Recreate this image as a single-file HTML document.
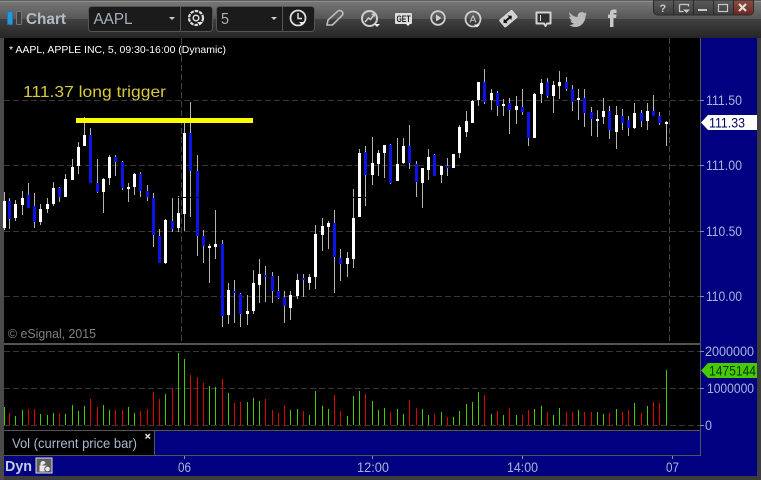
<!DOCTYPE html>
<html><head><meta charset="utf-8"><title>Chart</title>
<style>html,body{margin:0;padding:0;background:#3a3a3a;width:761px;height:480px;overflow:hidden}svg{display:block}
text{font-family:"Liberation Sans",sans-serif}</style></head><body>
<svg width="761" height="480" viewBox="0 0 761 480" xmlns="http://www.w3.org/2000/svg">
<defs>
<linearGradient id="t1" x1="0" y1="0" x2="0" y2="1"><stop offset="0" stop-color="#7a7a7a"/><stop offset="1" stop-color="#565656"/></linearGradient>
<linearGradient id="t2" x1="0" y1="0" x2="0" y2="1"><stop offset="0" stop-color="#414141"/><stop offset="1" stop-color="#262626"/></linearGradient>
<linearGradient id="wb" x1="0" y1="0" x2="0" y2="1"><stop offset="0" stop-color="#5c5c5c"/><stop offset="1" stop-color="#3c3c3c"/></linearGradient>
<linearGradient id="wr" x1="0" y1="0" x2="0" y2="1"><stop offset="0" stop-color="#8d4a3e"/><stop offset="1" stop-color="#6a2a20"/></linearGradient>
</defs>
<rect width="761" height="480" fill="#3c3c3c"/>
<rect x="0" y="0" width="4" height="480" fill="#4a4a4a"/>
<rect x="0" y="0" width="761" height="19" fill="url(#t1)"/>
<rect x="0" y="0" width="761" height="1" fill="#5e5e5e"/>
<rect x="0" y="1" width="761" height="1" fill="#8e8e8e"/>
<rect x="0" y="19" width="761" height="19" fill="url(#t2)"/>

<!-- title -->
<rect x="7.5" y="11.5" width="5" height="13" rx="1" fill="#1d9ae2" stroke="#3a6f96"/>
<rect x="16.5" y="11.5" width="5" height="13" rx="1" fill="#3c3c3c" stroke="#777"/>
<text x="26" y="24" font-size="16" font-weight="bold" fill="#b4bcc6" textLength="40" lengthAdjust="spacingAndGlyphs">Chart</text>

<!-- symbol box -->
<rect x="88.5" y="6.5" width="124" height="25" rx="3" fill="#1b1b1b" stroke="#555"/>
<path d="M180.5 7V31" stroke="#555"/>
<text x="93.500" y="24" font-size="16" fill="#a6b0bc" textLength="39" lengthAdjust="spacingAndGlyphs">AAPL</text>
<path d="M169 17h6l-3 3z" fill="#ccc"/>
<circle cx="196" cy="18" r="7" fill="none" stroke="#ddd" stroke-width="2.200" stroke-dasharray="3.500 1"/>
<circle cx="196" cy="18" r="2.800" fill="none" stroke="#ddd" stroke-width="1.500"/>
<path d="M197 22h6l-3 3z" fill="#eee"/>
<rect x="216.500" y="6.500" width="98" height="25" rx="3" fill="#1b1b1b" stroke="#555"/>
<path d="M282.500 7V31" stroke="#555"/>
<text x="221" y="24" font-size="16" fill="#a6b0bc" textLength="8" lengthAdjust="spacingAndGlyphs">5</text>
<path d="M271 17h6l-3 3z" fill="#ccc"/>
<circle cx="298" cy="18" r="7.500" fill="none" stroke="#ddd" stroke-width="1.800"/>
<path d="M298 13V18.500H302" fill="none" stroke="#ddd" stroke-width="1.500"/>
<path d="M299 22h6l-3 3z" fill="#eee"/>

<!-- toolbar icons -->
<g fill="none">
<path d="M327 25l1-5 10-9c1.500-1 3-.5 4 .5s1.500 2.500 0 4l-9.500 9.500z" stroke="#bdbdbd" stroke-width="1.600"/>
<circle cx="369.500" cy="18.500" r="7.500" stroke="#cfcfcf" stroke-width="2"/>
<path d="M365 22l3.500-4 2 1.500 3.500-4.500" stroke="#cfcfcf" stroke-width="1.500"/>
<circle cx="438" cy="18" r="6.800" stroke="#cfcfcf" stroke-width="1.800"/>
<circle cx="473" cy="19" r="7.500" stroke="#cfcfcf" stroke-width="1.800"/>
</g>
<path d="M371 14l4-1v4z" fill="#ccc"/><path d="M374 24h6l-3 3z" fill="#eee"/>
<rect x="395" y="13" width="17" height="11" rx="1" fill="#dcdcdc"/>
<text x="396.500" y="22" font-size="9" font-weight="bold" fill="#222" textLength="14" lengthAdjust="spacingAndGlyphs">GET</text>
<path d="M405 23h6l-3 3z" fill="#eee"/>
<path d="M436 14.500v7l5.500-3.500z" fill="#cfcfcf"/>
<text x="469.500" y="22.500" font-size="10" fill="#d0d0d0" textLength="7" lengthAdjust="spacingAndGlyphs">A</text>
<path d="M474 24.500h6l-3 3z" fill="#eee"/>
<g transform="rotate(-40 508 19)"><rect x="500" y="14" width="17" height="10" rx="1.500" fill="#d4d4d4"/>
<path d="M502 19l3-3v2h5v-2l3 3-3 3v-2h-5v2z" fill="#111"/></g>
<path d="M536.500 12.500h14v11h-3.500l-1.500 2.500-1.500-2.500h-7.500z" fill="#2f2f2f" stroke="#d4d4d4" stroke-width="2" stroke-linejoin="round"/>
<path d="M540.500 15v6" stroke="#ddd"/>
<path d="M570 13c2 2.500 5 4 7.500 4 0-3 2-5 4.200-5 1.200 0 2 .5 2.800 1.300l2-1-1 2.400 1.500-.7-1.500 2c0 6-4.500 11-10 11-2.500 0-4.500-.7-6-2 2 0 3.300-.5 4.700-1.500-2 0-3.300-1.200-3.800-3h2c-2-.6-3-2-3.200-4l2 .5c-1.800-1.400-2.300-3.700-1.700-5z" fill="#bcbcbc"/>
<path d="M610 27v-9h-2v-3.500h2v-1.500c0-2.500 1.500-3.500 3.500-3.500h3v3.500h-2c-.8 0-1 .4-1 1v.5h3l-.5 3.500h-2.500v9z" fill="#c8c8c8"/>

<!-- window buttons -->
<path d="M653.500 0v11a4 4 0 0 0 4 4h92a4 4 0 0 0 4-4V0z" fill="url(#wb)" stroke="#2a2a2a"/>
<path d="M733 1h20v10a3.500 3.500 0 0 1-3.500 3.500H733z" fill="url(#wr)"/>
<path d="M673.500 0v15M693.500 0v15M713.500 0v15M733.500 0v15" stroke="#2a2a2a"/>
<text x="659.500" y="12" font-size="11" font-weight="bold" fill="#c8c8c8">?</text>
<path d="M679.500 4.500h9v2M679.500 4.500v7h4" fill="none" stroke="#c8c8c8" stroke-width="1.300"/><path d="M683 9.500h7l-3.500 3.500z" fill="#c8c8c8"/>
<rect x="698" y="9" width="9" height="2" fill="#c8c8c8"/>
<rect x="718.500" y="4.500" width="9" height="7" fill="none" stroke="#c8c8c8" stroke-width="1.200"/>
<path d="M739 4l7 7M746 4l-7 7" stroke="#ddd" stroke-width="2.200"/>

<!-- plot area -->
<rect x="4" y="38" width="697" height="306" fill="#000"/>
<rect x="4" y="345" width="697" height="86" fill="#000"/>
<rect x="4" y="431" width="151" height="25" fill="#000"/>
<rect x="155" y="431" width="546" height="25" fill="#000080"/>
<rect x="701" y="38" width="56" height="438" fill="#000080"/>
<rect x="4" y="456" width="753" height="20" fill="#000080"/>
<rect x="4" y="343" width="697" height="2" fill="#555"/>
<rect x="4" y="430" width="697" height="1" fill="#555"/>
<rect x="4" y="455" width="697" height="1" fill="#555"/>
<rect x="154" y="431" width="1" height="25" fill="#555"/>
<rect x="700" y="38" width="1" height="418" fill="#555"/>

<!-- grid -->
<g shape-rendering="crispEdges" stroke="#363636" stroke-dasharray="6 3" fill="none">
<path d="M4 100.500H700M4 165.500H700M4 231.500H700M4 296.500H700M4 351.500H700M4 388.500H700M4 425.500H700"/>
<path d="M181.500 38V343M669.500 38V343" stroke="#444"/>
</g>
<path d="M700 100.500h4M700 165.500h4M700 231.500h4M700 296.500h4M700 351.500h4M700 388.500h4M700 425.500h4M184.500 456v3M372.500 456v3M522.500 456v3M672.500 456v3" stroke="#8a8aa0" shape-rendering="crispEdges"/>

<!-- wicks -->
<path shape-rendering="crispEdges" stroke="#b4b4b4" fill="none" d="M4.500 192V230M9.500 198V229M15.500 200V221M22.500 191V215M28.500 183V208M34.500 193V228M40.500 204V225M47.500 198V213M53.500 182V206M59.500 187V202M65.500 174V197M72.500 159V180M78.500 142V174M84.500 117V146M90.500 128V183M97.500 159V193M103.500 178V213M109.500 155V185M115.500 155V176M122.500 161V190M128.500 183V202M134.500 173V195M140.500 172V197M147.500 185V201M153.500 193V247M159.500 229V263M165.500 219V264M172.500 198V232M178.500 196V232M184.500 123V231M190.500 102V217M197.500 155V256M203.500 230V263M209.500 244V283M215.500 210V259M222.500 240V327M228.500 283V324M234.500 280V323M240.500 293V327M247.500 295V325M253.500 270V314M259.500 259V303M265.500 266V302M272.500 272V303M278.500 276V299M284.500 291V323M290.500 291V320M297.500 274V299M303.500 274V297M309.500 274V290M315.500 225V289M322.500 218V251M328.500 221V249M334.500 210V293M340.500 249V281M347.500 252V277M353.500 189V268M359.500 149V217M365.500 146V206M372.500 137V185M378.500 150V176M384.500 145V178M390.500 144V184M397.500 138V181M403.500 138V164M409.500 125V169M416.500 161V197M422.500 168V208M428.500 149V180M434.500 154V176M441.500 166V183M447.500 158V176M453.500 154V168M459.500 125V158M466.500 111V137M472.500 100V123M478.500 82V106M484.500 69V104M491.500 89V110M497.500 91V116M503.500 99V116M509.500 98V134M516.500 96V124M522.500 89V115M528.500 112V146M534.500 93V138M541.500 79V103M547.500 78V98M553.500 81V113M559.500 71V99M566.500 77V91M572.500 85V111M578.500 89V120M584.500 89V127M591.500 107V136M597.500 110V137M603.500 98V124M609.500 106V139M616.500 106V149M622.500 109V130M628.500 116V136M634.500 103V129M641.500 110V127M647.500 103V130M653.500 95V116M659.500 112V125M666.500 121V146"/>
<!-- white bodies -->
<path shape-rendering="crispEdges" fill="#fff" d="M3 201h3v27h-3zM14 204h3v14h-3zM21 198h3v7h-3zM39 209h3v13h-3zM46 204h3v5h-3zM52 188h3v16h-3zM64 179h3v18h-3zM71 167h3v13h-3zM77 147h3v19h-3zM83 135h3v11h-3zM102 179h3v13h-3zM108 157h3v21h-3zM127 187h3v2h-3zM133 174h3v13h-3zM164 220h3v43h-3zM177 213h3v15h-3zM183 133h3v81h-3zM208 246h3v2h-3zM214 244h3v3h-3zM227 290h3v25h-3zM246 311h3v3h-3zM252 283h3v28h-3zM258 274h3v11h-3zM289 295h3v13h-3zM296 280h3v16h-3zM308 277h3v6h-3zM314 234h3v43h-3zM321 226h3v9h-3zM327 223h3v4h-3zM346 258h3v6h-3zM352 218h3v41h-3zM358 153h3v64h-3zM371 163h3v12h-3zM377 153h3v11h-3zM383 145h3v8h-3zM396 164h3v17h-3zM402 146h3v17h-3zM421 168h3v15h-3zM427 157h3v13h-3zM440 166h3v9h-3zM452 154h3v14h-3zM458 127h3v26h-3zM465 121h3v11h-3zM471 101h3v22h-3zM477 82h3v18h-3zM490 93h3v7h-3zM502 104h3v2h-3zM515 106h3v4h-3zM533 94h3v44h-3zM540 83h3v11h-3zM552 85h3v11h-3zM558 82h3v4h-3zM577 98h3v2h-3zM596 119h3v2h-3zM602 111h3v6h-3zM615 115h3v17h-3zM633 113h3v15h-3zM646 111h3v10h-3zM665 122h3v2h-3z"/>
<!-- blue bodies -->
<path shape-rendering="crispEdges" fill="#0a14e6" d="M8 201h3v18h-3zM27 195h3v13h-3zM33 206h3v16h-3zM58 188h3v9h-3zM89 135h3v48h-3zM96 183h3v9h-3zM114 157h3v5h-3zM121 162h3v26h-3zM139 174h3v17h-3zM146 191h3v6h-3zM152 198h3v37h-3zM158 236h3v27h-3zM171 221h3v8h-3zM189 133h3v38h-3zM196 171h3v65h-3zM202 236h3v10h-3zM221 244h3v72h-3zM233 291h3v2h-3zM239 294h3v20h-3zM264 275h3v2h-3zM271 276h3v15h-3zM277 291h3v7h-3zM283 297h3v9h-3zM302 278h3v2h-3zM333 223h3v34h-3zM339 258h3v6h-3zM364 152h3v23h-3zM389 145h3v38h-3zM408 146h3v17h-3zM415 164h3v18h-3zM433 155h3v21h-3zM446 166h3v2h-3zM483 82h3v20h-3zM496 93h3v13h-3zM508 103h3v7h-3zM521 107h3v5h-3zM527 112h3v26h-3zM546 82h3v14h-3zM565 82h3v7h-3zM571 89h3v13h-3zM583 98h3v15h-3zM590 112h3v7h-3zM608 111h3v19h-3zM621 116h3v7h-3zM627 120h3v8h-3zM640 113h3v8h-3zM652 111h3v5h-3zM658 116h3v7h-3z"/>
<path shape-rendering="crispEdges" d="M178 197.500H200M352 197.500H366" stroke="#000"/>
<rect x="76" y="118" width="177" height="5" fill="#ffff00"/>

<!-- volume -->
<path shape-rendering="crispEdges" stroke="#44cc00" fill="none" d="M4.500 407V425M15.500 416V425M22.500 410V425M40.500 414V425M47.500 415V425M53.500 413V425M65.500 414V425M72.500 405V425M78.500 411V425M84.500 406V425M103.500 405V425M109.500 410V425M128.500 407V425M134.500 413V425M165.500 394V425M178.500 353V425M184.500 359V425M209.500 386V425M215.500 387V425M228.500 393V425M247.500 402V425M253.500 398V425M259.500 401V425M290.500 410V425M297.500 409V425M309.500 415V425M315.500 391V425M322.500 406V425M328.500 409V425M347.500 416V425M353.500 396V425M359.500 391V425M372.500 401V425M378.500 410V425M384.500 408V425M397.500 409V425M403.500 414V425M422.500 409V425M428.500 415V425M441.500 412V425M453.500 417V425M459.500 411V425M466.500 404V425M472.500 402V425M478.500 392V425M491.500 414V425M503.500 415V425M516.500 415V425M534.500 409V425M541.500 406V425M553.500 415V425M559.500 408V425M578.500 410V425M597.500 412V425M603.500 414V425M616.500 409V425M634.500 403V425M647.500 406V425M666.500 370V425"/>
<path shape-rendering="crispEdges" stroke="#e00000" fill="none" d="M9.500 413V425M28.500 409V425M34.500 409V425M59.500 413V425M90.500 399V425M97.500 407V425M115.500 410V425M122.500 410V425M140.500 411V425M147.500 409V425M153.500 392V425M159.500 399V425M172.500 388V425M190.500 375V425M197.500 377V425M203.500 383V425M222.500 379V425M234.500 403V425M240.500 402V425M265.500 399V425M272.500 410V425M278.500 413V425M284.500 405V425M303.500 411V425M334.500 395V425M340.500 411V425M365.500 394V425M390.500 412V425M409.500 400V425M416.500 408V425M434.500 414V425M447.500 417V425M484.500 395V425M497.500 411V425M509.500 408V425M522.500 415V425M528.500 410V425M547.500 412V425M566.500 412V425M572.500 412V425M584.500 412V425M591.500 412V425M609.500 413V425M622.500 412V425M628.500 410V425M641.500 413V425M653.500 402V425M659.500 403V425"/>

<!-- labels -->
<text x="9" y="53" font-size="10.500" fill="#fff" textLength="217" lengthAdjust="spacingAndGlyphs">* AAPL, APPLE INC, 5, 09:30-16:00 (Dynamic)</text>
<text x="23" y="97" font-size="16" fill="#d9c93e" textLength="143" lengthAdjust="spacingAndGlyphs">111.37 long trigger</text>
<text x="8" y="338" font-size="12.500" fill="#808080" textLength="88" lengthAdjust="spacingAndGlyphs">© eSignal, 2015</text>
<g font-size="13.500" fill="#a9b4d8">
<text x="706" y="105" textLength="36" lengthAdjust="spacingAndGlyphs">111.50</text>
<text x="706" y="170" textLength="36" lengthAdjust="spacingAndGlyphs">111.00</text>
<text x="706" y="236" textLength="36" lengthAdjust="spacingAndGlyphs">110.50</text>
<text x="706" y="301" textLength="36" lengthAdjust="spacingAndGlyphs">110.00</text>
<text x="705" y="356" textLength="49" lengthAdjust="spacingAndGlyphs">2000000</text>
<text x="707" y="393" textLength="47" lengthAdjust="spacingAndGlyphs">1000000</text>
<text x="705" y="430" textLength="7" lengthAdjust="spacingAndGlyphs">0</text>
<text x="178" y="472" textLength="13" lengthAdjust="spacingAndGlyphs">06</text>
<text x="357" y="472" textLength="32" lengthAdjust="spacingAndGlyphs">12:00</text>
<text x="507" y="472" textLength="31" lengthAdjust="spacingAndGlyphs">14:00</text>
<text x="666" y="472" textLength="13" lengthAdjust="spacingAndGlyphs">07</text>
</g>
<path d="M701 122.500l7-7.500h49v15h-49z" fill="#fff"/>
<text x="709" y="127.500" font-size="13.500" fill="#000060" textLength="36" lengthAdjust="spacingAndGlyphs">111.33</text>
<path d="M701 370.500l7-7.500h49v15h-49z" fill="#44cc00"/>
<text x="709" y="375.500" font-size="13.500" fill="#083000" textLength="47" lengthAdjust="spacingAndGlyphs">1475144</text>
<text x="12" y="448" font-size="13.500" fill="#a8b8d0" textLength="125" lengthAdjust="spacingAndGlyphs">Vol (current price bar)</text>
<path d="M145.500 434l4.500 4.500M150 434l-4.500 4.500" stroke="#ddd" stroke-width="1.500"/>
<text x="5" y="471" font-size="15" font-weight="bold" fill="#c4cce4" textLength="27" lengthAdjust="spacingAndGlyphs">Dyn</text>
<rect x="36" y="458" width="16" height="15" fill="#5e5e5e" stroke="#ddd" stroke-width="1"/>
<path d="M40 471v-5h6v5zM41 466v-2.500a2 2 0 0 1 4 0" fill="#e8e8e8" stroke="#e8e8e8"/>
<circle cx="47.500" cy="469" r="2.800" fill="#e8e8e8" stroke="#5e5e5e"/>
</svg>
</body></html>
